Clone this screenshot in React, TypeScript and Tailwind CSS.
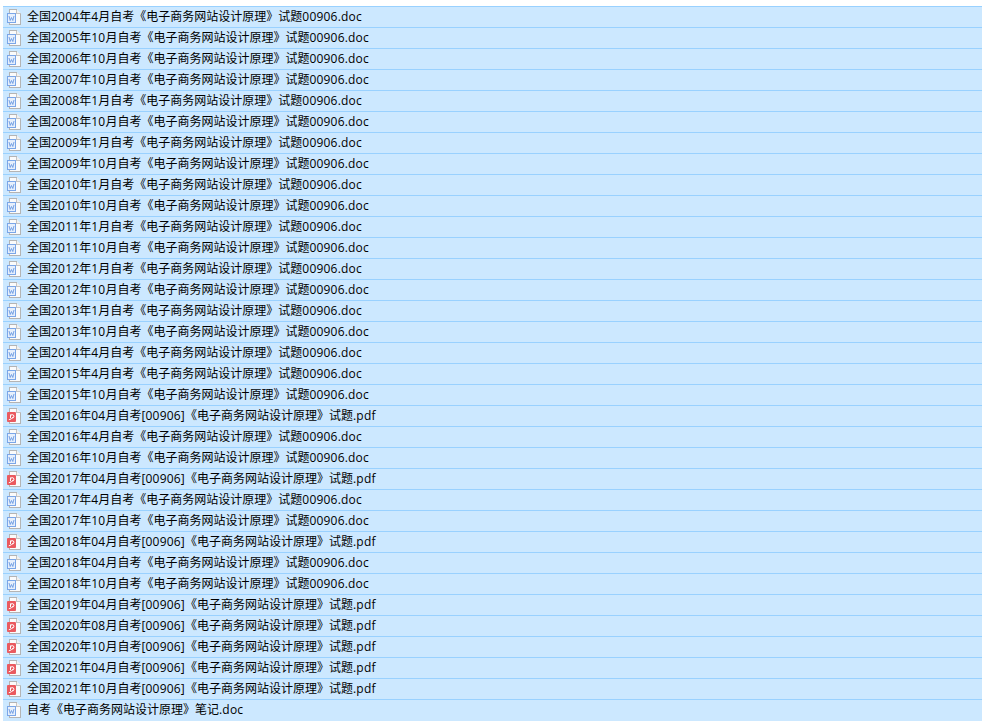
const T = "《电子商务网站设计原理》";
const doc = (y: string) => `全国${y}自考${T}试题00906.doc`;
const pdf = (y: string) => `全国${y}自考[00906]${T}试题.pdf`;
const files: string[] = [
  doc("2004年4月"), doc("2005年10月"), doc("2006年10月"), doc("2007年10月"), doc("2008年1月"), doc("2008年10月"),
  doc("2009年1月"), doc("2009年10月"), doc("2010年1月"), doc("2010年10月"), doc("2011年1月"), doc("2011年10月"),
  doc("2012年1月"), doc("2012年10月"), doc("2013年1月"), doc("2013年10月"), doc("2014年4月"), doc("2015年4月"),
  doc("2015年10月"), pdf("2016年04月"), doc("2016年4月"), doc("2016年10月"), pdf("2017年04月"), doc("2017年4月"),
  doc("2017年10月"), pdf("2018年04月"), doc("2018年04月"), doc("2018年10月"), pdf("2019年04月"), pdf("2020年08月"),
  pdf("2020年10月"), pdf("2021年04月"), pdf("2021年10月"), `自考${T}笔记.doc`,
];

function FileIcon({ kind }: { kind: "doc" | "pdf" }) {
  return (
    <svg width="16" height="16" viewBox="0 0 16 16" className="shrink-0">
      <path d="M3.500 0.500H10.500L14.500 4.500V15.500H3.500Z" fill="#fbfbfb" stroke="#b4b4b4" shapeRendering="crispEdges" />
      <path d="M10.500 0.500V4.500H14.500" fill="#f0f0f0" stroke="#c4c4c4" shapeRendering="crispEdges" />
      {kind === "doc" ? (
        <>
          <rect x="1.500" y="4.500" width="8" height="9" fill="#e6effc" stroke="#7aa6e8" />
          <path d="M3 7L4.200 11.500L5.500 8.500L6.800 11.500L8 7" fill="none" stroke="#6a9ae2" strokeWidth="0.9" />
        </>
      ) : (
        <>
          <rect x="1" y="4" width="9" height="10" rx="1" fill="#ea5a5f" />
          <path d="M4.500 8.500a1.700 1.700 0 1 1 1.500 1.500M4.500 6.500V10M2.800 11.800c1.500-.3 3.500-1.500 4.700-3" fill="none" stroke="#ffffff" strokeWidth="1" />
        </>
      )}
    </svg>
  );
}

function Label({ name }: { name: string }) {
  const parts = name.split(/([\x20-\x7e]+)/).filter(Boolean);
  return (
    <span className="whitespace-pre leading-[20px] [text-spacing-trim:space-all] [font-kerning:none]">
      {parts.map((p, i) =>
        /^[\x20-\x7e]/.test(p) ? (
          <span key={i} className="tracking-[0.2px]">{p}</span>
        ) : (
          <span key={i}>{p}</span>
        ),
      )}
    </span>
  );
}

export default function App() {
  return (
    <div className="h-[727px] w-[982px] overflow-hidden bg-white pt-[6px] pl-[3px] font-['Open_Sans','Noto_Sans_CJK_SC',sans-serif] text-[12px] text-black">
      <div className="flex flex-col bg-[#cce8ff] pb-px">
        {files.map((name, i) => (
          <div key={i} className="flex h-[21px] items-center gap-[5px] border-t border-[#99d1ff] pl-[3px]">
            <FileIcon kind={name.endsWith(".pdf") ? "pdf" : "doc"} />
            <Label name={name} />
          </div>
        ))}
      </div>
    </div>
  );
}
